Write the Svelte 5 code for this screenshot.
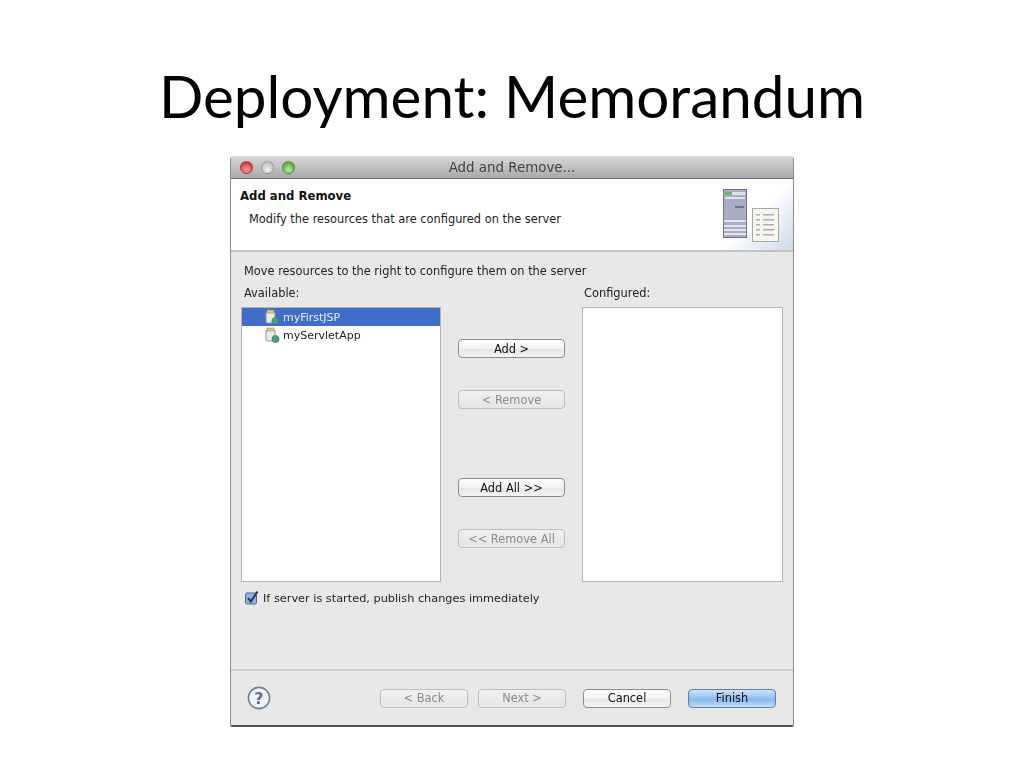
<script>
const available = [
	{ name: 'myFirstJSP', selected: true },
	{ name: 'myServletApp', selected: false },
];
const moveButtons = [
	{ label: 'Add >', disabled: false },
	{ label: '< Remove', disabled: true },
	{ label: 'Add All >>', disabled: false, spaced: true },
	{ label: '<< Remove All', disabled: true },
];
const navButtons = [
	{ label: '< Back', kind: 'disabled' },
	{ label: 'Next >', kind: 'disabled' },
	{ label: 'Cancel', kind: 'normal' },
	{ label: 'Finish', kind: 'primary' },
];
</script>

<div class="slide">
	<h1 class="slide-title">Deployment: Memorandum</h1>

	<div class="window">
		<div class="titlebar">
			<div class="traffic">
				<span class="light light--red"></span>
				<span class="light light--grey"></span>
				<span class="light light--green"></span>
			</div>
			<span class="titlebar-text">Add and Remove...</span>
		</div>

		<div class="banner">
			<div class="banner-text">
				<div class="banner-title">Add and Remove</div>
				<div class="banner-desc">Modify the resources that are configured on the server</div>
			</div>
			<svg class="banner-icon" width="62" height="54" viewBox="0 0 62 54">
				<rect x="2.5" y="0.5" width="23" height="48" fill="#a9adc4" stroke="#6d7290" />
				<rect x="4" y="3" width="20" height="3" fill="#dfe2ea" />
				<rect x="4" y="3" width="7" height="3" fill="#6fb56f" />
				<rect x="4" y="8" width="20" height="2" fill="#dfe2ea" />
				<rect x="14" y="17" width="9" height="2" fill="#6d7290" />
				<g fill="#e4e6ee">
					<rect x="3" y="31" width="22" height="2" />
					<rect x="3" y="36" width="22" height="2" />
					<rect x="3" y="40" width="22" height="2" />
					<rect x="3" y="44" width="22" height="2" />
				</g>
				<rect x="31.5" y="19.5" width="26" height="33" fill="#f6f5ee" stroke="#a9a99e" />
				<g fill="#a8aebb">
					<rect x="35" y="25" width="4" height="1.5" /><rect x="42" y="25" width="11" height="1.5" />
					<rect x="35" y="30" width="4" height="1.5" /><rect x="42" y="30" width="11" height="1.5" />
					<rect x="35" y="35" width="4" height="1.5" /><rect x="42" y="35" width="11" height="1.5" />
					<rect x="35" y="40" width="4" height="1.5" /><rect x="42" y="40" width="11" height="1.5" />
					<rect x="35" y="45" width="4" height="1.5" /><rect x="42" y="45" width="11" height="1.5" />
				</g>
			</svg>
		</div>

		<div class="content">
			<div class="hint">Move resources to the right to configure them on the server</div>
			<div class="columns">
				<div class="col col--available">
					<div class="col-label">Available:</div>
					<div class="list">
						{#each available as item}
							<div class="list-row" class:list-row--selected={item.selected}>
								<svg class="module-icon" width="16" height="16" viewBox="0 0 16 16">
									<rect x="1" y="3" width="9" height="11" rx="1" fill="#e6ebf4" stroke="#8b93a6" />
									<rect x="2" y="1" width="7" height="3" fill="#e8c878" stroke="#a08a50" stroke-width="0.6" />
									<circle cx="10.5" cy="12" r="3.6" fill="#4b9a8a" stroke="#3a6a70" stroke-width="0.6" />
								</svg>
								<span>{item.name}</span>
							</div>
						{/each}
					</div>
				</div>

				<div class="move-buttons">
					{#each moveButtons as btn}
						<button class="btn btn--move" class:btn--disabled={btn.disabled} class:btn--spaced={btn.spaced}>{btn.label}</button>
					{/each}
				</div>

				<div class="col col--configured">
					<div class="col-label">Configured:</div>
					<div class="list"></div>
				</div>
			</div>

			<label class="publish">
				<svg width="16" height="16" viewBox="0 0 16 16">
					<rect x="1.5" y="3" width="11" height="11" rx="1.5" fill="#8fb2e6" stroke="#4f6590" />
					<path d="M4 8l2.8 3.6L13.5 1.5" fill="none" stroke="#26334e" stroke-width="2" />
				</svg>
				<span>If server is started, publish changes immediately</span>
			</label>
		</div>

		<div class="footer">
			<svg class="help" width="24" height="24" viewBox="0 0 24 24">
				<circle cx="12" cy="12" r="10.6" fill="#f1f3f6" stroke="#6c7f9b" stroke-width="1.6" />
				<text x="12" y="17.5" text-anchor="middle" class="help-mark">?</text>
			</svg>
			<div class="nav-buttons">
				{#each navButtons as btn}
					<button class="btn btn--nav btn--{btn.kind}">{btn.label}</button>
				{/each}
			</div>
		</div>
	</div>
</div>

<style>
	:global(body) {
		margin: 0;
		background: #fff;
	}

	.slide {
		width: 1024px;
		height: 768px;
		display: flex;
		flex-direction: column;
		align-items: center;
		overflow: hidden;
	}

	.slide-title {
		margin: 0;
		height: 156px;
		box-sizing: border-box;
		padding-top: 59px;
		font-family: Lato, "Open Sans", sans-serif;
		font-size: 58.4px;
		font-weight: 400;
		line-height: 72px;
		color: #000;
	}

	.window {
		width: 564px;
		height: 571px;
		box-sizing: border-box;
		display: flex;
		flex-direction: column;
		background: #e8e8e8;
		border: 1px solid #8a8a8a;
		border-top: 0;
		border-bottom: 2px solid #555;
		border-radius: 4px 4px 2px 2px;
		font-family: "DejaVu Sans", sans-serif;
		font-size: 11.4px;
		color: #222;
		filter: blur(0.45px);
	}

	.titlebar {
		height: 22px;
		flex-shrink: 0;
		position: relative;
		display: flex;
		align-items: center;
		justify-content: center;
		background: linear-gradient(#d9d9d9, #a9a9a9);
		border-bottom: 1px solid #6e6e6e;
		border-radius: 4px 4px 0 0;
	}

	.titlebar-text {
		font-size: 13.4px;
		color: #444;
	}

	.traffic {
		position: absolute;
		left: 9px;
		top: 5px;
		display: flex;
		gap: 8px;
	}

	.light {
		width: 13px;
		height: 13px;
		border-radius: 50%;
		box-sizing: border-box;
		border: 1px solid rgba(0, 0, 0, 0.25);
	}

	.light--red {
		background: radial-gradient(circle at 50% 70%, #f7a0a0, #dc3f3f 70%);
	}

	.light--grey {
		background: radial-gradient(circle at 50% 70%, #efefef, #c4c4c4 70%);
	}

	.light--green {
		background: radial-gradient(circle at 50% 70%, #c0eaa0, #62b03f 70%);
	}

	.banner {
		height: 71px;
		flex-shrink: 0;
		display: flex;
		justify-content: space-between;
		background: linear-gradient(135deg, #fff 88%, #cfd9ec 100%);
		border-bottom: 2px solid #c4c4c4;
	}

	.banner-text {
		padding: 9px 0 0 9px;
	}

	.banner-title {
		font-weight: 700;
		font-size: 11.7px;
		line-height: 16px;
		color: #111;
	}

	.banner-desc {
		margin-top: 7px;
		padding-left: 9px;
		line-height: 16px;
	}

	.banner-icon {
		margin: 10px 10px 0 0;
	}

	.content {
		flex: 1;
		padding: 11px 10px 0 10px;
	}

	.hint {
		padding-left: 3px;
		line-height: 16px;
	}

	.columns {
		margin-top: 6px;
		display: flex;
	}

	.col {
		flex-shrink: 0;
	}

	.col--available {
		width: 200px;
	}

	.col--configured {
		width: 201px;
	}

	.col-label {
		padding-left: 3px;
		height: 22px;
		line-height: 16px;
	}

	.col--configured .col-label {
		padding-left: 2px;
	}

	.list {
		height: 273px;
		background: #fff;
		border: 1px solid #b4b4b4;
	}

	.list-row {
		height: 18px;
		padding-left: 23px;
		display: flex;
		align-items: center;
		gap: 2px;
		font-size: 11px;
		color: #222;
	}

	.list-row--selected {
		background: #3f6dc8;
		color: #e8eefa;
	}

	.move-buttons {
		width: 141px;
		flex-shrink: 0;
		box-sizing: border-box;
		padding: 54px 17px 0;
		display: flex;
		flex-direction: column;
		gap: 32px;
	}

	.btn {
		display: block;
		padding: 0;
		font-family: inherit;
		font-size: 11.4px;
		height: 19px;
		box-sizing: border-box;
		border: 1px solid #8c8c8c;
		border-radius: 4px;
		background: linear-gradient(#fff, #f2f2f2 50%, #e6e6e6 51%, #f4f4f4);
		color: #111;
	}

	.btn--move {
		width: 107px;
	}

	.btn--spaced {
		margin-top: 37px;
	}

	.btn--disabled {
		border-color: #bdbdbd;
		background: linear-gradient(#f0f0f0, #e6e6e6);
		color: #8b8b8b;
	}

	.publish {
		margin-top: 7px;
		margin-left: 3px;
		display: flex;
		align-items: center;
		gap: 3px;
		height: 18px;
	}

	.publish span {
		font-size: 11.3px;
	}

	.footer {
		height: 56px;
		flex-shrink: 0;
		box-sizing: border-box;
		border-top: 2px solid #cfcfcf;
		display: flex;
		align-items: center;
		justify-content: space-between;
		padding: 0 17px 0 16px;
	}

	.help-mark {
		font-family: "DejaVu Sans", sans-serif;
		font-weight: 700;
		font-size: 16px;
		fill: #5b6f8c;
	}

	.nav-buttons {
		display: flex;
		gap: 10px;
	}

	.btn--nav {
		width: 88px;
	}

	.nav-buttons .btn--nav:nth-child(3) {
		margin-left: 7px;
	}

	.nav-buttons .btn--nav:nth-child(4) {
		margin-left: 7px;
	}

	.btn--primary {
		border-color: #5f7ea8;
		background: linear-gradient(#cfe3f8, #8fc0f0 50%, #7fb4ec 51%, #c4e0f8);
	}
</style>
